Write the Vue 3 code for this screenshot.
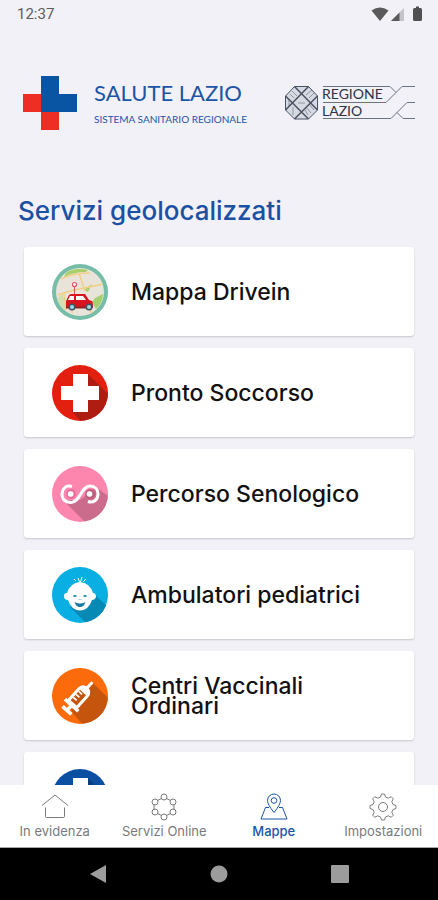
<template>
  <div class="app">
    <div class="status-bar">
      <span>12:37</span>
      <svg class="status-icons" width="52" height="16" viewBox="0 0 52 16">
        <path d="M0.5 4.5Q9 -1.5 17.5 4.5L9 15Z" fill="#5a5a5c" />
        <path d="M33 2V15H20Z" fill="#c4c4c8" />
        <path d="M28.500 6.500V15H20Z" fill="#5a5a5c" />
        <path d="M43.500 2H45V0.500H48V2H49.500Q51 2 51 3.500V13.500Q51 15 49.500 15H43.500Q42 15 42 13.500V3.500Q42 2 43.500 2Z" fill="#505052" />
      </svg>
    </div>

    <header class="header">
      <svg width="54" height="54" viewBox="0 0 54 54">
        <path d="M0 18H18V36H36V54H18V36H0Z" fill="#ee2d24" />
        <path d="M18 0H36V18H54V36H18Z" fill="#0a54a4" />
      </svg>
      <div class="brand">
        <span class="brand-name">SALUTE LAZIO</span>
        <span class="brand-sub">SISTEMA SANITARIO REGIONALE</span>
      </div>
      <svg class="regione" width="132" height="36" viewBox="0 0 132 36">
        <g fill="#d6dae2" stroke="#4a5262" stroke-width="1">
          <path d="M10.500 1.500H24.500L33.500 11V25L24.500 34H10.500L1.500 25V11Z" />
          <path d="M1.500 11L24.500 34M10.500 1.500L33.500 25M24.500 1.500L1.500 25M33.500 11L10.500 34" stroke-width="1.5" />
          <path d="M6 9L10 13M8 6L13 11M22 10L28 5M25 13L30 8M5 22V15M9 30V22M14 18H21M22 22L27 28M25 19L30 25M21 25L24 30" stroke-width="0.5" fill="none" />
        </g>
        <g fill="none" stroke="#6c727e" stroke-width="1">
          <path d="M39 1.500H106L112 7.500M39 17.500H102L118 1.500H131" />
          <path d="M39 33.500H107L123 17.500H131M113 27.500L119 33.500H131" />
        </g>
        <text x="38" y="14" class="regione-text">REGIONE</text>
        <text x="38" y="31" class="regione-text">LAZIO</text>
      </svg>
    </header>

    <main class="content">
      <h1>Servizi geolocalizzati</h1>
      <div class="list">
        <button v-for="item in services" :key="item.id" type="button" class="card">
          <svg class="card-icon" viewBox="0 0 56 56">
            <defs>
              <clipPath :id="'clip-' + item.id"><circle cx="28" cy="28" r="28" /></clipPath>
            </defs>
            <circle cx="28" cy="28" r="28" :fill="item.color" />
            <g :clip-path="'url(#clip-' + item.id + ')'">
              <template v-if="item.id == 'drivein'">
                <circle cx="28" cy="28" r="24" fill="#e9e4da" />
                <path d="M14 9Q22 3 36 6L34 8Q22 8 12 13Z" fill="#a8cf6a" />
                <path d="M32 26L40 20L36 28ZM43 34L51 30Q51 39 44 45L40 38Z" fill="#a5d070" />
                <path d="M5 34L11 30L14 47Q7 43 5 34Z" fill="#d3dfb0" />
                <path d="M9 15Q22 9 38 9M6 31Q16 27 27 25T51 20M12 30L14 46M27 9L33 27M20 49V44M37 44L40 49" fill="none" stroke="#f3cf85" stroke-width="1.500" />
                <circle cx="22.500" cy="20.500" r="2" fill="#fff" stroke="#dd5260" stroke-width="1.200" />
                <path d="M22.500 23V31" stroke="#dd5260" />
                <path d="M14 42V37L17 31Q18 30 20 30H33L37 36L40 37Q41 38 41 44H14Z" fill="#d8141e" />
                <path d="M18 32H22V36H16ZM24 32H31L34 36H24Z" fill="#fff" />
                <path d="M14 43.500H40" stroke="#8c252b" stroke-width="2" />
                <circle cx="20" cy="43" r="3.500" fill="#315b66" />
                <circle cx="37" cy="43" r="3.500" fill="#315b66" />
                <circle cx="20" cy="43" r="2" fill="#a6d7dc" />
                <circle cx="37" cy="43" r="2" fill="#a6d7dc" />
              </template>
              <template v-else-if="item.id == 'soccorso' || item.id == 'more'">
                <path d="M36 9L56 29V56H29L20 47L22 34L9 34Z" :fill="item.shade" />
                <path d="M21 9H36V21H47V35H36V47H21V35H9V21H21Z" fill="#fff" />
              </template>
              <template v-else-if="item.id == 'senologico'">
                <path d="M11 34L33 56H56V30L44 21L28 34Z" :fill="item.shade" />
                <path d="M20 20.500C13 18.500 10 24 10 28C10 34 14 36.500 19 36.500C28 36.500 29 20 38 20C43 20 46 23.500 46 28C46 34 41 37.500 36 35.500" fill="none" stroke="#fff" stroke-width="3" />
                <circle cx="19" cy="28" r="4" fill="none" stroke="#e5678f" stroke-width="1.500" />
                <circle cx="38" cy="28" r="4" fill="none" stroke="#b95579" stroke-width="1.500" />
                <circle cx="18.500" cy="28" r="2.800" fill="#fff" />
                <circle cx="37.500" cy="28" r="2.800" fill="#fff" />
              </template>
              <template v-else-if="item.id == 'pediatrici'">
                <path d="M43 28L56 40V56H34L18 40Z" :fill="item.shade" />
                <path d="M28 15Q38 16 41 26Q44 26 44 30Q43 33 40 33Q37 43 28 43.500Q19 43 16 33Q12 33 12 29Q12 26 15 26Q18 16 28 15Z" fill="#fff" />
                <path d="M28 16L26 11M28.500 15L30 10M24 14L22 12M31 15L34 12" stroke="#fff" stroke-width="1" />
                <path d="M21.500 29.500Q23 28 24.500 29.500M31.500 29.500Q33 28 34.500 29.500" fill="none" stroke="#1681a8" stroke-width="1.500" />
                <path d="M26.500 32.500H29.500" stroke="#a6cedb" stroke-width="1" />
                <path d="M22.500 35Q28 38 33.500 35Q32 40 28 40Q24 40 22.500 35Z" fill="#1477a0" />
              </template>
              <template v-else-if="item.id == 'vaccinali'">
                <path d="M41 15L58 32V58H32L19 43Z" :fill="item.shade" />
                <g transform="rotate(42 27 29)">
                  <path d="M27 9V16M21.500 23Q21.500 18 27 17Q32.500 18 32.500 23V39H21.500Z" fill="#fff" stroke="#fff" stroke-width="3" />
                  <path d="M23 23H31V37H23Z" :fill="item.shade" />
                  <path d="M23 25H27.500M23 29H27.500M23 33H27.500" stroke="#fff" stroke-width="1.800" />
                  <path d="M18 40H36M27 40V46M21 47H33" stroke="#fff" stroke-width="3.500" />
                </g>
              </template>
            </g>
          </svg>
          <span v-if="item.label" class="card-label">{{ item.label }}</span>
        </button>
      </div>
    </main>

    <nav class="tabs">
      <button
        v-for="tab in tabs"
        :key="tab.id"
        type="button"
        class="tab"
        :class="{ active: currentTab == tab.id }"
        @click="currentTab = tab.id"
      >
        <svg width="28" height="28" viewBox="0 0 28 28" fill="none" stroke="currentColor" stroke-width="1">
          <path v-if="tab.id == 'evidenza'" d="M1 12.500L14 2L27 12.500M4.500 14.500V23.500Q4.500 24.500 5.500 24.500H22.500Q23.500 24.500 23.500 23.500V14.500" />
          <template v-else-if="tab.id == 'online'">
            <circle v-for="dot in ringDots" :key="dot.join()" :cx="dot[0]" :cy="dot[1]" r="3" />
            <path d="M11.500 5.500L7.500 7.500M16.500 5.500L20.500 7.500M4 11.500V16.500M24 11.500V16.500M7.500 20.500L11.500 22.500M20.500 20.500L16.500 22.500" />
          </template>
          <template v-else-if="tab.id == 'mappe'">
            <path d="M14 19.500Q7.500 11.500 7.500 7.500A6.500 6.500 0 0 1 20.500 7.500Q20.500 11.500 14 19.500Z" />
            <circle cx="14" cy="7.500" r="2.800" />
            <path d="M9 14.500H5.500L1 26H27L22.500 14.500H19" />
          </template>
          <template v-else>
            <path d="M11.500 4L12.500 1H15.500L16.500 4L19.300 5.200L22.200 3.700L24.300 5.800L22.800 8.700L24 11.500L27 12.500V15.500L24 16.500L22.800 19.300L24.300 22.200L22.200 24.300L19.300 22.800L16.500 24L15.500 27H12.500L11.500 24L8.700 22.800L5.800 24.300L3.700 22.200L5.200 19.300L4 16.500L1 15.500V12.500L4 11.500L5.200 8.700L3.700 5.800L5.800 3.700L8.700 5.200Z" stroke-linejoin="round" />
            <circle cx="14" cy="14" r="4.500" />
          </template>
        </svg>
        <span>{{ tab.label }}</span>
      </button>
    </nav>

    <div class="system-nav">
      <button type="button" aria-label="Indietro">
        <svg width="18" height="18" viewBox="0 0 18 18"><path d="M1 9L17 0V18Z" /></svg>
      </button>
      <button type="button" aria-label="Home">
        <svg width="18" height="18" viewBox="0 0 18 18"><circle cx="9" cy="9" r="8.500" /></svg>
      </button>
      <button type="button" aria-label="Recenti">
        <svg width="18" height="18" viewBox="0 0 18 18"><rect width="18" height="18" rx="1" /></svg>
      </button>
    </div>
  </div>
</template>

<script setup>
import { ref } from "vue";

const services = [
  { id: "drivein", label: "Mappa Drivein", color: "#76bda7" },
  { id: "soccorso", label: "Pronto Soccorso", color: "#e3200f", shade: "#af1c12" },
  { id: "senologico", label: "Percorso Senologico", color: "#fd86ae", shade: "#cc6c8c" },
  { id: "pediatrici", label: "Ambulatori pediatrici", color: "#09aee2", shade: "#0789b5" },
  { id: "vaccinali", label: "Centri Vaccinali Ordinari", color: "#fb6b0b", shade: "#c5550d" },
  { id: "more", label: "", color: "#0b4fa3", shade: "#083d80" },
];

const tabs = [
  { id: "evidenza", label: "In evidenza" },
  { id: "online", label: "Servizi Online" },
  { id: "mappe", label: "Mappe" },
  { id: "impostazioni", label: "Impostazioni" },
];
const currentTab = ref("mappe");

const ringDots = [
  [14, 4],
  [23, 9],
  [23, 19],
  [14, 24],
  [5, 19],
  [5, 9],
];
</script>

<style>
body {
  margin: 0;
  background: #f2f1f8;
}
</style>

<style scoped>
.app {
  display: flex;
  flex-direction: column;
  height: 100vh;
  overflow: hidden;
  background: #f2f1f8;
  font-family: Inter, "Open Sans", sans-serif;
}

button {
  border: none;
  padding: 0;
  font-family: inherit;
  cursor: pointer;
}

svg {
  display: block;
  flex: none;
}

.status-bar {
  display: flex;
  align-items: center;
  justify-content: space-between;
  height: 28px;
  padding: 0 15px 0 17px;
  font-family: Roboto, sans-serif;
  font-size: 15px;
  color: #5c5c60;
}

.header {
  display: flex;
  align-items: center;
  flex: none;
  padding: 48px 22px 0 23px;
}

.brand {
  display: flex;
  flex-direction: column;
  gap: 6px;
  margin-left: 17px;
  font-family: Lato, sans-serif;
  color: #1c55a5;
  white-space: nowrap;
}

.brand-name {
  font-size: 22px;
  line-height: 26px;
}

.brand-sub {
  font-size: 10px;
  line-height: 14px;
}

.regione {
  margin-left: auto;
}

.regione-text {
  font-family: Lato, sans-serif;
  font-size: 14px;
  fill: #2d3342;
}

.content {
  flex: 1;
  min-height: 0;
  overflow: hidden;
}

h1 {
  margin: 66px 18px 21px;
  font-size: 26px;
  line-height: 30px;
  font-weight: 500;
  color: #1b50a3;
}

.list {
  display: flex;
  flex-direction: column;
  gap: 12px;
  padding: 0 24px;
}

.card {
  display: flex;
  align-items: center;
  gap: 23px;
  min-height: 89px;
  padding: 0 40px 0 28px;
  background: #fff;
  border-radius: 3px;
  box-shadow: 0 1px 2px rgba(0, 0, 0, 0.18);
  text-align: left;
}

.card-icon {
  width: 56px;
  height: 56px;
}

.card-label {
  font-size: 23px;
  line-height: 20px;
  font-weight: 500;
  color: #111;
}

.tabs {
  display: grid;
  grid-template-columns: repeat(4, 1fr);
  flex: none;
  height: 62px;
  background: #fff;
  border-bottom: 1px solid #aaa;
}

.tab {
  display: flex;
  flex-direction: column;
  align-items: center;
  gap: 2px;
  padding-top: 8px;
  background: none;
  color: #7a7a7c;
  font-size: 13px;
  line-height: 16px;
  white-space: nowrap;
}

.tab.active {
  color: #1c55a8;
  font-weight: 500;
}

.system-nav {
  display: grid;
  grid-template-columns: repeat(3, 1fr);
  flex: none;
  height: 52px;
  padding: 0 38px;
  background: #000;
}

.system-nav button {
  display: flex;
  align-items: center;
  justify-content: center;
  background: none;
  fill: #9c9c9c;
}
</style>
